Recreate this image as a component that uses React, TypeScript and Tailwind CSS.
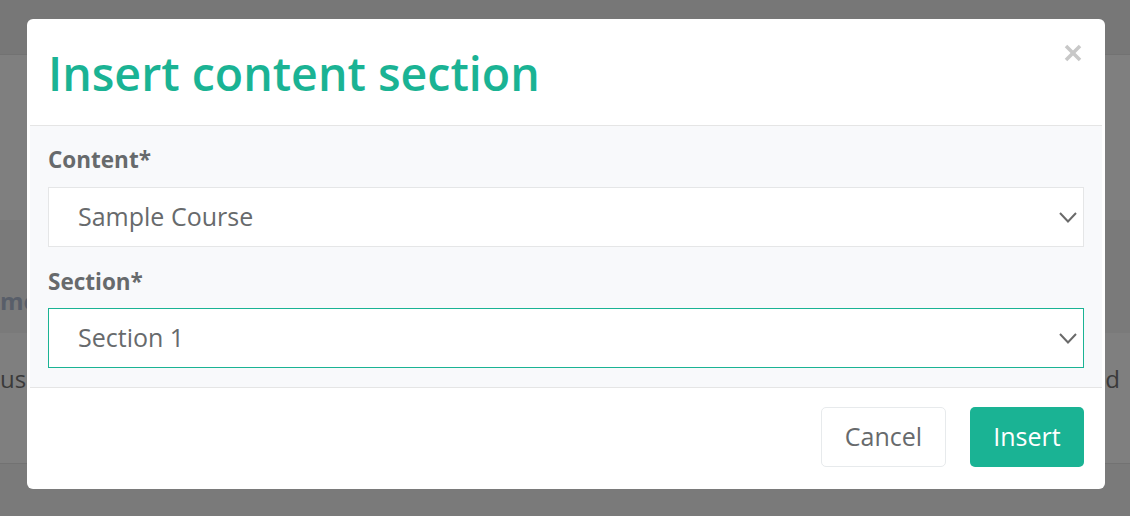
import React from "react";

const Chevron = () => (
  <svg width="18" height="11" viewBox="0 0 18 11" fill="none" className="shrink-0">
    <polyline points="1,1 9,9.5 17,1" stroke="#6a6a6a" strokeWidth="2" />
  </svg>
);

const SelectBox = ({ value, focused }: { value: string; focused?: boolean }) => (
  <div
    className={
      focused
        ? "flex h-[60px] items-center justify-between border border-[#1ab394] bg-white pl-[29px] pr-[6px]"
        : "flex h-[60px] items-center justify-between border border-[#e5e6e7] bg-white pl-[29px] pr-[6px]"
    }
  >
    <span className="text-[25px] text-[#676a6c]">{value}</span>
    <Chevron />
  </div>
);

const App = () => {
  return (
    <div className="relative h-[516px] w-[1130px] overflow-hidden bg-[#7f7f7f] font-['Open_Sans',sans-serif]">
      {/* page behind the overlay */}
      <div className="h-[55px] border-b border-[#727272] bg-[#777777]" />
      <div className="h-[165px]" />
      <div className="flex h-[113px] items-end bg-[#7a7a7a] pb-[14px]">
        <span className="text-[24px] font-bold text-[#585e69]">me</span>
      </div>
      <div className="flex h-[130px] justify-between pt-[28px]">
        <span className="text-[24px] text-[#3a3a3a]">us :</span>
        <span className="pr-[10px] text-[24px] text-[#3a3a3a]">d</span>
      </div>
      <div className="h-[53px] border-t border-[#727272] bg-[#7a7a7a]" />

      {/* modal */}
      <div className="absolute left-[27px] top-[19px] w-[1078px] rounded-[6px] bg-white">
        <div className="mx-[3px] flex h-[107px] items-center justify-between border-b border-[#e5e5e5] pl-[18px] pr-[20px]">
          <h4 className="pt-[2px] text-[46.5px] font-semibold leading-[58px] text-[#1ab394]">
            Insert content section
          </h4>
          <svg width="18" height="18" viewBox="0 0 18 18" className="mb-[38px]">
            <line x1="2" y1="2" x2="16" y2="16" stroke="#c8c8c8" strokeWidth="3.6" />
            <line x1="16" y1="2" x2="2" y2="16" stroke="#c8c8c8" strokeWidth="3.6" />
          </svg>
        </div>
        <div className="mx-[3px] border-b border-[#e5e5e5] bg-[#f8f9fb] px-[18px] pb-[19px] pt-[19px]">
          <label className="mb-[12px] block text-[22.5px] font-bold leading-[30px] text-[#676a6c]">Content*</label>
          <SelectBox value="Sample Course" />
          <label className="mb-[11px] mt-[20px] block text-[22.5px] font-bold leading-[30px] text-[#676a6c]">
            Section*
          </label>
          <SelectBox value="Section 1" focused />
        </div>
        <div className="mx-[3px] flex justify-end gap-[24px] pb-[22px] pr-[18px] pt-[19px]">
          <button className="h-[60px] w-[125px] rounded-[5px] border border-[#e7eaec] bg-white text-[25px] text-[#676a6c]">
            Cancel
          </button>
          <button className="h-[60px] w-[114px] rounded-[5px] bg-[#1ab394] text-[25px] text-white">Insert</button>
        </div>
      </div>
    </div>
  );
};

export default App;
